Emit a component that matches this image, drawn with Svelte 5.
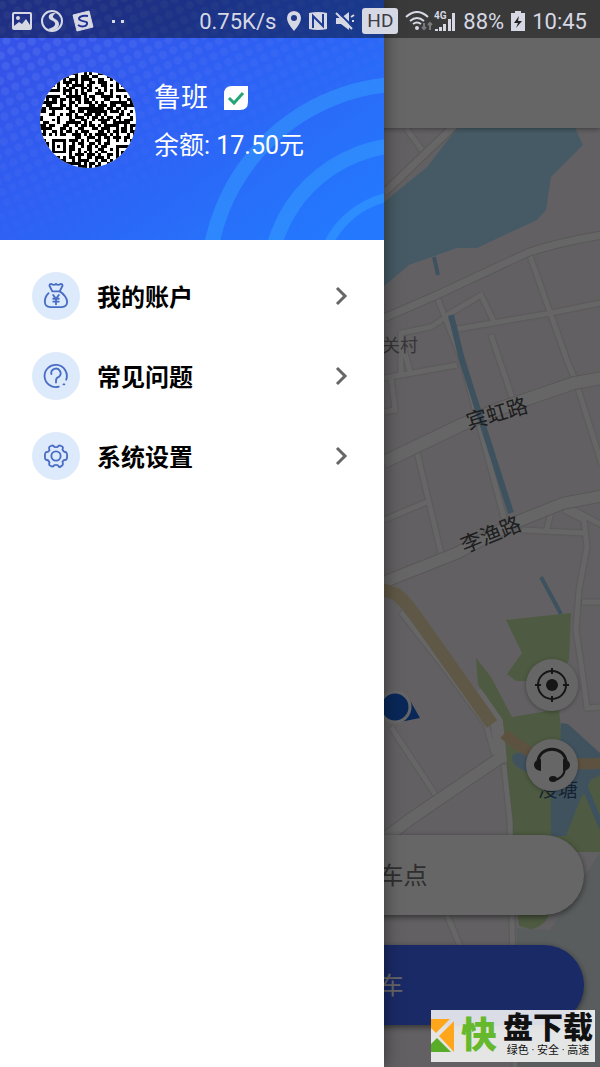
<script lang="ts">
  interface MenuItem {
    icon: 'wallet' | 'help' | 'settings';
    label: string;
  }

  const menu: MenuItem[] = [
    { icon: 'wallet', label: '我的账户' },
    { icon: 'help', label: '常见问题' },
    { icon: 'settings', label: '系统设置' },
  ];

  let user = { name: '鲁班', balance: 17.5 };

  // one string per row of the avatar code, # = dark module
  const qr = [
    '#######..#.##..#.#..##.##.#######',
    '#.....#.##..#.###.##...##.#.....#',
    '#.###.#.#.###.####..##..#.#.###.#',
    '#.###.#.###.#.#..##.###...#.###.#',
    '#.###.#..#.####.##...##.#.#.###.#',
    '#.....#.#.##..##.#.#..#...#.....#',
    '#######.###.#.#.##..#.#.#.#######',
    '........#.#.#.##...###..#........',
    '#.#####..#####.#.##..####.##.#.##',
    '..#.##.##.#.##.##.#...##...#..##.',
    '######.#..##.#.###.#.#..######.#.',
    '..##...##.#.#....##.###.##..#####',
    '##.#####.##..#########.##.##.#...',
    '##..#.....##.##.#######.###.#..#.',
    '...##..#.##.#..###.##.#....##.#..',
    '#.....#...#.###.#.##.#.##.##...#.',
    '#...#.#...##..##..#.####.#.#.###.',
    '.##...#..#####.#.#...##..######..',
    '##.##...##..#.##.##.#.#####..#.##',
    '####...##.#..##...##.###..#.##.#.',
    '.#..##.#.##.#.###...##.#.##.##.##',
    '##.#.#.##..###.#.#.####.#.#...#.#',
    '#...........##..###.#.##.###.##..',
    '.#..#####.###.#.#..##..#..#..#.#.',
    '#.#.#...#..#.##..##.#.##.........',
    '.##.#.#.#.##..#.##.#.##...#######',
    '#.#.#...#.##.#..##..##..#.#.....#',
    '.##.#####.#..#.#.#.#.##...#.###.#',
    '#.........#.###.###.#..##.#.###.#',
    '.##..##.#.##.#..##.###.#..#.###.#',
    '#.#.##.##..#.####..#.##.#.#.....#',
    '.#.##.#.######.#.##.#..#..#######',
    '##.#.#..#.#..###.#.##.##.#.#.#.#.',
  ];

  const qrPath = qr
    .flatMap((row, y) => [...row].map((c, x) => (c === '#' ? `M${x} ${y}h1v1h-1z` : '')))
    .join('');
</script>

<div class="screen">
  <main class="page">
    <header class="toolbar"></header>

    <section class="map-area">
      <svg class="map" viewBox="0 128 600 939" preserveAspectRatio="xMaxYMin slice" aria-hidden="true">
        <rect y="128" width="600" height="939" fill="#f5f0f5" />

        <!-- lake and parks -->
        <path class="water" d="M457 128L427 167 384 202 330 240V320L384 286 409 265 457 248 477 248 537 220 546 210 551 177 583 145 576 130V128z" />
        <path fill="#e0e9ea" d="M517 928L550 930 600 852V1067H514z" />
        <path class="park" d="M506 620L571 613 569 660 556 682 516 681 507 674 522 653z" />
        <path class="park" d="M476 658L491 677 512 717 559 709 562 740 600 762V852H512L505 740 478 684z" />
        <path class="park" d="M517 910H551Q545 928 530 929L519 926z" />
        <path class="water deep" d="M561 723L568 724 600 753V775L591 780 580 800 566 836H551V797L553 780 530 773Q512 768 512 757Q516 750 524 754L560 755z" />
        <path class="canal" stroke-width="6" d="M584 785L602 828" />

        <!-- side streets -->
        <g class="street">
          <path d="M406 128L424 153" />
          <path d="M437 297L462 360 504 518" />
          <path d="M444 317L481 295 494 322" />
          <path d="M452 330L551 313 600 303" />
          <path d="M529 253L567 360 576 382 602 465" />
          <path d="M401 376V333L431 327 446 317" />
          <path d="M491 335L512 397" />
          <path d="M384 378L457 365M404 350L411 375" />
          <path d="M384 412L395 410 391 378" />
          <path d="M417 452L441 553M384 520L427 502" />
          <path d="M551 513L546 532M522 530L584 533M564 510L584 520 587 547 579 590 576 630 581 663 587 708 600 707" />
          <path d="M570 508L602 525M582 602H600" />
          <path d="M401 612L444 667 486 724 496 760" />
          <path d="M391 727L437 797" />
          <path d="M447 915L460 946" />
          <path d="M504 765L510 820 515 1067" />
        </g>

        <!-- main roads -->
        <g class="road-edge">
          <path d="M384 318L437 295 527 253Q555 243 602 235" stroke-width="9" />
          <path d="M384 462L461 425 501 408 574 383 602 378" stroke-width="14" />
          <path d="M384 582L457 553 514 523 564 503 602 496" stroke-width="13" />
          <path d="M380 842L409 820 500 758" stroke-width="13" />
          <path d="M384 193L454 126" stroke-width="9" />
        </g>
        <g class="road">
          <path d="M384 318L437 295 527 253Q555 243 602 235" stroke-width="7" />
          <path d="M384 462L461 425 501 408 574 383 602 378" stroke-width="12" />
          <path d="M384 582L457 553 514 523 564 503 602 496" stroke-width="11" />
          <path d="M380 842L409 820 500 758" stroke-width="11" />
          <path d="M384 193L454 126" stroke-width="7" />
          <path d="M476 692L497 722 501 762" stroke-width="12" />
        </g>
        <path d="M380 589L396 594 Q404 600 412 611L492 724" fill="none" stroke="#eddcb0" stroke-width="13" />
        <path d="M504 734Q522 750 545 758T602 763" fill="none" stroke="#e8cba0" stroke-width="11" />

        <path class="canal" stroke-width="6" d="M451 315L462 360 511 513" />
        <path class="canal" stroke-width="4" d="M434 257L438 275M541 577L561 614" />

        <g class="place">
          <text x="382" y="352" font-size="18">关村</text>
          <text class="major" transform="rotate(-16 497 414)" x="497" y="421" font-size="21">宾虹路</text>
          <text class="major" transform="rotate(-22 491 535)" x="491" y="542" font-size="21">李渔路</text>
          <text class="major lake" x="558" y="797" font-size="20">浸塘</text>
        </g>

        <!-- own position -->
        <path d="M400 722L420 718 408 697z" fill="#1764dc" />
        <circle cx="395" cy="707" r="15" fill="#1764dc" stroke="#fff" stroke-width="3" />
      </svg>

      <div class="tools">
        <button class="tool" type="button" aria-label="定位">
          <svg viewBox="0 0 36 36" width="36" height="36" fill="none" stroke="#383838" stroke-width="2">
            <circle cx="18" cy="18" r="14" />
            <circle cx="18" cy="18" r="6" fill="#383838" stroke="none" />
            <path d="M18 1v6M18 29v6M1 18h6M29 18h6" />
          </svg>
        </button>
        <button class="tool" type="button" aria-label="客服">
          <svg viewBox="0 0 36 36" width="36" height="36" fill="none" stroke="#383838" stroke-width="3">
            <path d="M4 15C5-2 31-2 32 15" />
            <path d="M31 22C30 29 26 32 20 33" stroke-width="2" />
            <path fill="#383838" stroke="none" d="M7 12v12Q0 23 0 18t7-6zM29 12v12q7-1 7-6t-7-6z" />
            <ellipse cx="19" cy="32" rx="4" ry="3" fill="#383838" stroke="none" />
          </svg>
        </button>
      </div>

      <div class="actions">
        <button class="pill" type="button">车点</button>
        <button class="pill primary" type="button">车</button>
      </div>
    </section>
  </main>

  <div class="scrim"></div>

  <aside class="drawer">
    <header class="profile">
      <svg class="pattern" viewBox="0 0 384 240" preserveAspectRatio="xMaxYMax slice" aria-hidden="true">
        <defs>
          <linearGradient id="fade" x1="0" y1="0" x2="0.7" y2="1">
            <stop offset="0" stop-color="#fff" />
            <stop offset="0.75" stop-color="#000" />
          </linearGradient>
          <pattern id="dots" width="16" height="16" patternUnits="userSpaceOnUse" patternTransform="rotate(20)">
            <circle cx="4" cy="4" r="4" fill="#6a86f2" />
            <circle cx="12" cy="12" r="4" fill="#6a86f2" />
          </pattern>
          <mask id="dot-mask"><rect width="384" height="240" fill="url(#fade)" /></mask>
        </defs>
        <rect width="384" height="240" fill="url(#dots)" mask="url(#dot-mask)" opacity="0.35" />
        <g fill="none" stroke="#36a0ff" opacity="0.5">
          <circle cx="407" cy="283" r="199" stroke-width="15" />
          <circle cx="407" cy="283" r="138" stroke-width="15" />
          <circle cx="407" cy="283" r="88" stroke-width="9" />
        </g>
      </svg>

      <svg class="avatar" viewBox="0 0 33 33" role="img" aria-label={user.name}>
        <path d={qrPath} shape-rendering="crispEdges" />
      </svg>
      <div class="info">
        <div class="name">
          <span>{user.name}</span>
          <svg width="24" height="24" viewBox="0 0 24 24" aria-hidden="true">
            <path d="M8 0H24V16Q24 24 16 24H0V8Q0 0 8 0z" fill="#fff" />
            <path d="M5 12l5 5 9-10" fill="none" stroke="#26a577" stroke-width="3" />
          </svg>
        </div>
        <div class="balance">余额: {user.balance.toFixed(2)}元</div>
      </div>
    </header>

    <nav class="menu">
      {#each menu as item}
        <a class="item" href="#{item.icon}">
          <span class="badge">
            <svg viewBox="0 0 28 28" width="26" height="26" fill="none" stroke="#4a6dc4" stroke-width="2" stroke-linecap="round" stroke-linejoin="round">
              {#if item.icon === 'wallet'}
                <path d="M10 9L7 3Q7 1 9 1Q12 3 14 1Q16 3 19 1Q21 1 21 3L18 9H11" />
                <path d="M18 9C23 12 26 17 26 20Q26 26 20 26H8Q2 26 2 20Q2 15 6 11" />
                <path d="M11 13l3 4 3-4M14 17v6M11 17h6M11 20h6" />
              {:else if item.icon === 'help'}
                <path d="M17 25.5A12 12 0 1 1 25 18" />
                <path d="M9 12a5 5 0 1 1 8 3Q14 16 14 19" />
                <path d="M14 20v1M22 23h1" />
              {:else}
                <path d="M9 3Q11 2 12 4Q14 5 16 4Q17 2 19 3L21 4Q22 5 21 7Q22 10 25 10Q26 11 26 14Q26 17 25 18Q22 18 21 20Q22 23 21 24L18 26Q17 26 16 24Q14 23 12 24Q11 26 9 25L7 24Q6 23 7 21Q6 18 3 18Q2 17 2 14Q2 11 3 10Q6 10 7 8Q6 5 7 4z" />
                <circle cx="14" cy="14" r="5" />
              {/if}
            </svg>
          </span>
          <span class="label">{item.label}</span>
          <svg class="chevron" viewBox="0 0 14 20" width="14" height="20" aria-hidden="true">
            <path d="M3 2l8 8-8 8" fill="none" stroke="#666" stroke-width="3" />
          </svg>
        </a>
      {/each}
    </nav>
  </aside>

  <div class="status">
    <div class="group notices">
      <svg width="20" height="18" viewBox="0 0 20 18">
        <rect x="1" y="1" width="18" height="16" rx="1" fill="none" stroke="currentColor" stroke-width="2" />
        <path d="M2 14l5-4 3 2 4-5 4 6v3H2z" fill="currentColor" />
        <circle cx="6" cy="6" r="2" fill="currentColor" />
      </svg>
      <svg width="22" height="22" viewBox="0 0 22 22">
        <circle cx="11" cy="11" r="10" fill="none" stroke="currentColor" stroke-width="2" />
        <path d="M15 3C7 2 6 8 10 10C16 12 16 17 7 19C12 22 18 19 18 14C18 9 11 9 12 6Q13 4 15 3z" fill="currentColor" />
      </svg>
      <svg width="22" height="22" viewBox="0 0 22 22">
        <path d="M1 5L17 1 21 17 5 21z" fill="currentColor" stroke="currentColor" stroke-linejoin="round" />
        <path d="M16 6C9 5 5 8 8 10S16 11 15 14 9 17 6 15" fill="none" stroke="#203092" stroke-width="2" />
      </svg>
      <svg width="14" height="4" viewBox="0 0 14 4">
        <path d="M1 1h3v3h-3zM10 1h3v3h-3z" fill="currentColor" />
      </svg>
    </div>

    <div class="group system">
      <span>0.75K/s</span>
      <svg class="pin" width="14" height="20" viewBox="0 0 14 20">
        <path fill="currentColor" fill-rule="evenodd" d="M7 0Q14 1 14 7Q14 12 7 20Q0 12 0 7Q0 1 7 0zM7 4a3 3 0 1 0 0 6a3 3 0 1 0 0-6z" />
      </svg>
      <svg width="20" height="20" viewBox="0 0 20 20">
        <path d="M1 2Q10 0 19 2V18Q10 20 1 18z" fill="currentColor" />
        <path d="M5 17V5l9 9M15 3v12L6 6" fill="none" stroke="#1d3c93" stroke-width="2" />
      </svg>
      <svg width="20" height="20" viewBox="0 0 20 20">
        <path d="M1 7h5l8-6v18l-8-6H1z" fill="currentColor" />
        <path d="M3 1l16 16" stroke="#1d3c93" stroke-width="2" />
        <path d="M1 2l16 16M16 6l3-2M17 10h2" stroke="currentColor" stroke-width="2" />
      </svg>
      <span class="hd">HD</span>
      <svg width="28" height="20" viewBox="0 0 28 20" fill="none" stroke="currentColor" stroke-width="2">
        <path d="M1 6Q12-4 23 6M5 10Q12 4 19 10M8 13Q12 10 16 13" />
        <circle cx="12" cy="17" r="1" fill="currentColor" />
        <path d="M19 12v7M17 16l2 2 2-2M25 19v-7M23 14l2-2 2 2" opacity="0.4" />
      </svg>
      <svg class="signal" width="22" height="22" viewBox="0 0 22 22">
        <path d="M1 19h3v2H1zM5 17h3v4H5zM9 14h3v7h-3zM14 9h3v12h-3zM18 3h3v18h-3z" fill="currentColor" />
        <text x="0" y="9" font-size="10" font-weight="700" fill="currentColor">4G</text>
      </svg>
      <span>88%</span>
      <svg width="14" height="20" viewBox="0 0 14 20">
        <path d="M4 0h6v2h4v18H0V2h4z" fill="currentColor" />
        <path d="M8 5l-5 7h4l-2 5 6-7H7z" fill="#222" />
      </svg>
      <span>10:45</span>
    </div>
  </div>

  <div class="stamp">
    <svg width="24" height="34" viewBox="0 0 24 34" aria-hidden="true">
      <path d="M0 0H19L5 14 0 9z" fill="#ffa61a" />
      <path d="M23 2V33L8 17z" fill="#ffa61a" />
      <path d="M6 19L20 33H0V25z" fill="#58ad28" />
    </svg>
    <span class="stamp-lead">快</span>
    <div class="stamp-text">
      <strong>盘下载</strong>
      <small>绿色 · 安全 · 高速</small>
    </div>
  </div>
</div>

<style>
  :global(body) {
    margin: 0;
  }

  .screen {
    position: relative;
    min-height: 100vh;
    display: flex;
    overflow: hidden;
    font-family: Roboto, 'Noto Sans CJK SC', sans-serif;
  }

  button {
    border: 0;
    font: inherit;
  }

  .page {
    flex: 1;
    display: flex;
    flex-direction: column;
    isolation: isolate;
  }

  .toolbar {
    height: 128px;
    background: #fff;
    box-shadow: 0 1px 5px rgba(0, 0, 0, 0.4);
    z-index: 1;
  }

  .map-area {
    position: relative;
    flex: 1;
    display: flex;
    flex-direction: column;
    justify-content: flex-end;
    gap: 44px;
    padding: 0 16px 42px;
  }

  .map {
    position: absolute;
    inset: 0;
    width: 100%;
    height: 100%;
  }

  .water {
    fill: #aee2fc;
  }

  .deep {
    fill: #a2cdee;
  }

  .park {
    fill: #c2e2a2;
  }

  .canal {
    fill: none;
    stroke: #98cdec;
  }

  .street,
  .road,
  .road-edge {
    fill: none;
    stroke: #fff;
  }

  .street {
    stroke-width: 5px;
    filter: drop-shadow(0 0 1px #c8c4c4);
  }

  .road-edge {
    stroke: #dcd8d8;
  }

  .place {
    fill: #8a868a;
  }

  .place .major {
    fill: #4c4c50;
    text-anchor: middle;
  }

  .place .lake {
    fill: #36597c;
  }

  .tools {
    position: relative;
    display: flex;
    flex-direction: column;
    align-items: flex-end;
    gap: 28px;
    padding-right: 6px;
  }

  .tool {
    width: 52px;
    height: 52px;
    padding: 8px;
    border-radius: 50%;
    background: #fff;
    box-shadow: 0 1px 4px rgba(0, 0, 0, 0.3);
  }

  .actions {
    position: relative;
    display: flex;
    flex-direction: column;
    gap: 30px;
  }

  .pill {
    height: 80px;
    padding: 0 0 4px 64%;
    border-radius: 40px;
    background: #fff;
    box-shadow: 0 2px 6px rgba(0, 0, 0, 0.5);
    color: #757575;
    font-size: 24px;
    text-align: left;
  }

  .primary {
    background: #4169ff;
    color: #fff;
  }

  .scrim {
    position: absolute;
    inset: 0;
    background: rgba(0, 0, 0, 0.6);
  }

  .drawer {
    position: absolute;
    inset: 0 auto 0 0;
    width: 64%;
    background: #fff;
    box-shadow: 0 0 16px rgba(0, 0, 0, 0.5);
  }

  .profile {
    position: relative;
    box-sizing: border-box;
    height: 240px;
    display: flex;
    align-items: flex-start;
    gap: 18px;
    padding: 72px 40px 0;
    background: linear-gradient(145deg, #3553e8 15%, #2e60f4 45%, #2478fd 90%);
    color: #fff;
  }

  .pattern {
    position: absolute;
    inset: 0;
    width: 100%;
    height: 100%;
  }

  .avatar {
    position: relative;
    width: 96px;
    height: 96px;
    flex-shrink: 0;
    border-radius: 50%;
    background: #fff;
  }

  .info {
    position: relative;
    display: flex;
    flex-direction: column;
    gap: 12px;
    padding-top: 8px;
  }

  .name {
    display: flex;
    align-items: center;
    gap: 16px;
    font-size: 27px;
    line-height: 36px;
  }

  .balance {
    font-size: 25px;
    line-height: 36px;
    white-space: nowrap;
  }

  .menu {
    display: flex;
    flex-direction: column;
    padding-top: 16px;
  }

  .item {
    display: flex;
    align-items: center;
    gap: 17px;
    height: 80px;
    padding: 0 36px 0 32px;
    color: #000;
    font-size: 24px;
    font-weight: 700;
    text-decoration: none;
  }

  .badge {
    width: 48px;
    height: 48px;
    display: grid;
    place-items: center;
    border-radius: 50%;
    background: #dceafc;
  }

  .label {
    flex: 1;
    padding-bottom: 2px;
  }

  .status {
    position: absolute;
    inset: 0 0 auto;
    height: 38px;
    display: flex;
    align-items: center;
    justify-content: space-between;
    box-sizing: border-box;
    padding: 4px 13px 0 12px;
    background: rgba(0, 0, 0, 0.43);
    color: #d6d8e4;
    font-size: 22px;
  }

  .group {
    display: flex;
    align-items: center;
  }

  .notices {
    gap: 9px;
  }

  .notices svg:last-child {
    margin-left: 8px;
  }

  .system {
    gap: 7px;
  }

  .pin {
    margin-left: 4px;
  }

  .hd {
    padding: 0 5px;
    border-radius: 3px;
    background: #d6d8e4;
    color: #3c3c44;
    font-size: 19px;
    line-height: 26px;
  }

  .signal {
    margin-left: -6px;
  }

  .stamp {
    position: absolute;
    right: 5px;
    bottom: 5px;
    height: 52px;
    display: flex;
    align-items: center;
    gap: 6px;
    padding-right: 2px;
    background: rgba(255, 255, 255, 0.84);
  }

  .stamp-lead {
    color: #66b82c;
    font-size: 36px;
    font-weight: 900;
    line-height: 52px;
  }

  .stamp-text {
    display: flex;
    flex-direction: column;
    align-items: center;
    color: #111;
  }

  .stamp-text strong {
    font-size: 30px;
    font-weight: 900;
    line-height: 30px;
  }

  .stamp-text small {
    font-size: 11px;
    line-height: 16px;
  }
</style>
